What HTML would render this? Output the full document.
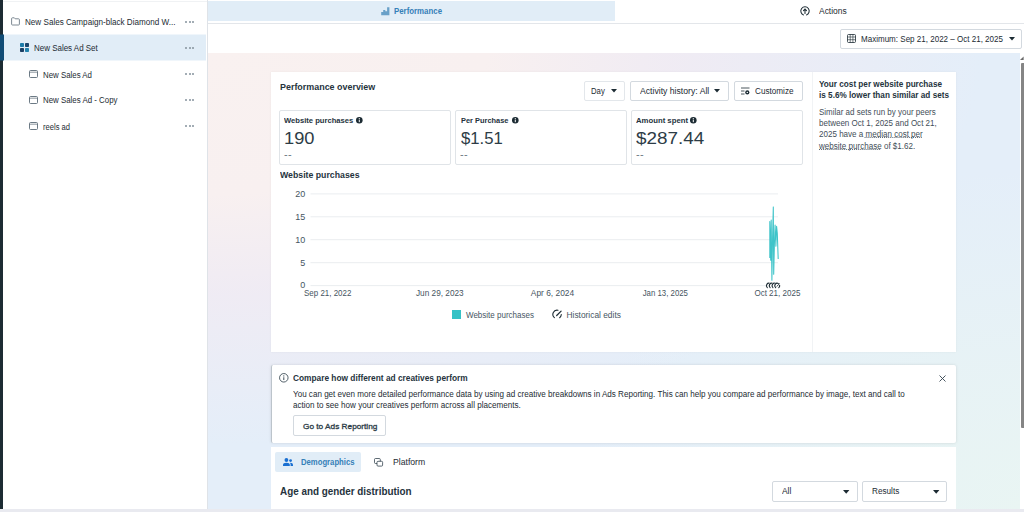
<!DOCTYPE html>
<html lang="en">
<head>
<meta charset="utf-8">
<title>Ads Manager - Performance</title>
<style>
*{box-sizing:border-box;margin:0;padding:0}
html,body{width:1024px;height:512px;overflow:hidden;background:#fff}
body{position:relative;font-family:"Liberation Sans",sans-serif;color:#1c2b33;font-size:8.4px;-webkit-font-smoothing:antialiased}
.abs{position:absolute}
.t{position:absolute;white-space:nowrap;line-height:12px;height:12px}
.b{font-weight:bold;color:#25333d}
#strip{left:0;top:0;width:3px;height:509px;background:#1c2b33}
#bottom{left:0;top:509px;width:1024px;height:3px;background:#e9eaf0}
#side{left:3px;top:0;width:204.6px;z-index:2;height:509px;background:#fff;border-right:1px solid #dfe3e8}
#side .sel{left:0;top:34.5px;width:203px;height:26px;background:#e1edf7}
#side .selbar{left:-3px;top:34.5px;width:4px;height:26px;background:#114c76}
.dots{position:absolute;left:182px;width:10px;height:3px}
.dots i{position:absolute;top:0;width:2px;height:2px;border-radius:50%;background:#84929d}
.dots i:nth-child(1){left:0}.dots i:nth-child(2){left:3.5px}.dots i:nth-child(3){left:7px}
#main{left:207px;top:0;width:817px;height:509px;background:#fff}
#tabPerf{left:0;top:1px;width:408px;height:20px;background:#e1edf7}
#tabline{left:0;top:22.6px;width:817px;height:1px;background:#e3e6ea}
#bg{left:0;top:53px;width:817px;height:456px;background:radial-gradient(ellipse 95% 86% at 0% 0%,#f9f1f0 0%,#f8f0f0 36%,rgba(241,235,243,.9) 60%,rgba(228,238,249,0) 100%),radial-gradient(ellipse 55% 75% at 100% 100%,#e9f5f3 0%,rgba(233,245,243,.6) 45%,rgba(228,238,249,0) 100%),#e4eef9}
#bg2{display:none}
#sb{left:812.6px;top:53px;width:4.4px;height:456px;background:#fff}
#sbthumb{left:813.6px;top:63px;width:3.4px;height:365px;background:#858585;border-radius:1px 0 0 1px}
.btn{position:absolute;background:#fff;border:1px solid #d3d9df;border-radius:2px}
.card{position:absolute;background:#fff}
.box{position:absolute;background:#fff;border:1px solid #e0e4e8;border-radius:2px}
.g{color:#3f4e58}
.du{text-decoration:underline dotted #56636d;text-decoration-thickness:0.9px;text-underline-offset:0.3px;text-decoration-skip-ink:none}
svg{position:absolute;overflow:visible}
</style>
</head>
<body>
<div id="strip" class="abs"></div>
<div id="bottom" class="abs"></div>

<!-- SIDEBAR -->
<div id="side" class="abs">
  <div class="abs" style="left:0;top:1px;width:204px;height:1px;background:#f0f2f4"></div>
  <svg style="left:-3px;top:0" width="207" height="70" viewBox="0 0 207 70"><rect x="3" y="34.5" width="203" height="26" fill="#e1edf7"/><rect x="0" y="34.5" width="4" height="26" fill="#114c76"/></svg>
  <svg style="left:8px;top:17px" width="9" height="9" viewBox="0 0 9 9"><path d="M0.6 1.6 Q0.6 0.8 1.4 0.8 H3.3 L4.2 1.8 H7.6 Q8.4 1.8 8.4 2.6 V7.2 Q8.4 8 7.6 8 H1.4 Q0.6 8 0.6 7.2 Z" fill="none" stroke="#6f7d88" stroke-width="0.9"/></svg>
  <span class="t" id="s1" style="left:21.50px;top:16.00px;font-size:8.3px;transform:scaleX(0.9772);transform-origin:0 50%">New Sales Campaign-black Diamond W...</span>
  <div class="dots" style="top:20.5px"><i></i><i></i><i></i></div>

  <svg style="left:17px;top:43px" width="9" height="9" viewBox="0 0 9 9"><rect x="0" y="0" width="4" height="4" rx="0.8" fill="#1c7ba9"/><rect x="5" y="0" width="4" height="4" rx="0.8" fill="#1b456b"/><rect x="0" y="5" width="4" height="4" rx="0.8" fill="#1b3f63"/><rect x="5" y="5" width="4" height="4" rx="0.8" fill="#2383ae"/></svg>
  <span class="t" id="s2" style="left:30.75px;top:41.75px;font-size:8.3px;transform:scaleX(0.9598);transform-origin:0 50%">New Sales Ad Set</span>
  <div class="dots" style="top:46.6px"><i></i><i></i><i></i></div>

  <svg style="left:26px;top:70px" width="9" height="8" viewBox="0 0 9 8"><rect x="0.5" y="0.5" width="8" height="7" rx="1" fill="none" stroke="#5b6b77" stroke-width="0.9"/><path d="M0.5 2.2 H8.5" stroke="#5b6b77" stroke-width="0.7"/></svg>
  <span class="t" id="s3" style="left:40.00px;top:68.70px;font-size:8.3px;transform:scaleX(0.9486);transform-origin:0 50%">New Sales Ad</span>
  <div class="dots" style="top:73px"><i></i><i></i><i></i></div>

  <svg style="left:26px;top:96px" width="9" height="8" viewBox="0 0 9 8"><rect x="0.5" y="0.5" width="8" height="7" rx="1" fill="none" stroke="#5b6b77" stroke-width="0.9"/><path d="M0.5 2.2 H8.5" stroke="#5b6b77" stroke-width="0.7"/></svg>
  <span class="t" id="s4" style="left:40.00px;top:94.10px;font-size:8.3px;transform:scaleX(0.9502);transform-origin:0 50%">New Sales Ad - Copy</span>
  <div class="dots" style="top:98.5px"><i></i><i></i><i></i></div>

  <svg style="left:26px;top:122px" width="9" height="8" viewBox="0 0 9 8"><rect x="0.5" y="0.5" width="8" height="7" rx="1" fill="none" stroke="#5b6b77" stroke-width="0.9"/><path d="M0.5 2.2 H8.5" stroke="#5b6b77" stroke-width="0.7"/></svg>
  <span class="t" id="s5" style="left:40.00px;top:120.50px;font-size:8.3px;transform:scaleX(0.9143);transform-origin:0 50%">reels ad</span>
  <div class="dots" style="top:124.5px"><i></i><i></i><i></i></div>
</div>

<!-- MAIN -->
<div id="main" class="abs">
  <div id="tabPerf" class="abs"></div>
  <div id="tabline" class="abs"></div>
  <div id="bg" class="abs"></div>
  <div id="bg2" class="abs"></div>
  <div id="sb" class="abs"></div>
  <div id="sbthumb" class="abs"></div>
  <svg style="left:813.4px;top:56px" width="3.6" height="4" viewBox="0 0 3.6 4"><path d="M0 4 L3.6 0.4 V4 Z" fill="#6a6a6a"/></svg>

  <!-- top tabs -->
  <svg style="left:174.1px;top:6.6px" width="8.6" height="8.2" viewBox="0 0 9 9"><path d="M0 9 V5.6 H2.2 V3.4 H4.5 V4.6 H6.5 V0.4 H9 V9 Z" fill="#69a0c8"/></svg>
  <span class="t b" id="tp" style="left:187.00px;top:5.00px;color:#3580b8;font-size:8.5px;transform:scaleX(0.9236);transform-origin:0 50%">Performance</span>
  <svg style="left:593.3px;top:6px" width="10" height="10" viewBox="0 0 10 10"><g fill="none" stroke="#1c2b33" stroke-width="1.05" stroke-linecap="round"><path d="M3.5 8.9 A4.2 4.2 0 1 1 6.5 8.9"/><path d="M5 7.4 V3.2 M3.5 4.6 L5 3.1 L6.5 4.6"/></g></svg>
  <span class="t" id="ta" style="left:612.00px;top:5.00px;font-size:8.4px;transform:scaleX(1.0102);transform-origin:0 50%">Actions</span>
  <div class="btn" id="dateBtn" style="left:633.2px;top:28.6px;width:181.4px;height:20px"></div>
  <svg style="left:640px;top:33.5px" width="9" height="9" viewBox="0 0 9 9"><rect x="0.5" y="0.5" width="8" height="8" rx="1" fill="none" stroke="#1c2b33" stroke-width="0.8"/><path d="M0.5 3 H8.5 M0.5 5.7 H8.5 M3.2 0.5 V8.5 M5.9 0.5 V8.5" stroke="#1c2b33" stroke-width="0.6"/></svg>
  <span class="t" id="td" style="left:654.00px;top:32.50px;font-size:8.3px;transform:scaleX(0.9681);transform-origin:0 50%">Maximum: Sep 21, 2022 – Oct 21, 2025</span>
  <svg style="left:801.8px;top:36.8px" width="6" height="3.6" viewBox="0 0 7 4"><path d="M0 0 H7 L3.5 4 Z" fill="#1c2b33"/></svg>


  <!-- card 1 -->
  <div class="card" id="c1" style="left:63.5px;top:71.5px;width:685.5px;height:280.5px;box-shadow:0 0 2px rgba(0,0,0,.06)"></div>
  <div class="abs" style="left:604.5px;top:71.5px;width:1px;height:280.5px;background:#f1f3f5"></div>
  <span class="t b" id="po" style="left:72.75px;top:81.00px;font-size:9.5px;transform:scaleX(0.9394);transform-origin:0 50%">Performance overview</span>
  <div class="btn" style="left:377px;top:80.5px;width:41px;height:20px;border-color:#e3e7eb"></div>
  <span class="t" id="bday" style="left:383.75px;top:85.00px;font-size:8.3px;transform:scaleX(0.9312);transform-origin:0 50%">Day</span>
  <svg style="left:403.5px;top:88.5px" width="6" height="3.6" viewBox="0 0 7 4"><path d="M0 0 H7 L3.5 4 Z" fill="#1c2b33"/></svg>
  <div class="btn" style="left:423px;top:80.5px;width:99px;height:20px"></div>
  <span class="t" id="bact" style="left:432.50px;top:85.00px;font-size:8.4px;transform:scaleX(1.0333);transform-origin:0 50%">Activity history: All</span>
  <svg style="left:507px;top:88.5px" width="6" height="3.6" viewBox="0 0 7 4"><path d="M0 0 H7 L3.5 4 Z" fill="#1c2b33"/></svg>
  <div class="btn" style="left:527px;top:80.5px;width:68.5px;height:20px"></div>
  <svg style="left:534px;top:86.5px" width="9" height="8" viewBox="0 0 9 8"><path d="M0 1 H8.5 M0 4 H3.5 M0 7 H3.5" stroke="#1c2b33" stroke-width="0.8"/><circle cx="6.3" cy="5.4" r="2.1" fill="#1c2b33"/><circle cx="6.3" cy="5.4" r="0.7" fill="#fff"/></svg>
  <span class="t" id="bcus" style="left:547.50px;top:85.00px;font-size:8.3px;transform:scaleX(0.9821);transform-origin:0 50%">Customize</span>

  <div class="box" style="left:72px;top:110px;width:172px;height:54.5px"></div>
  <div class="box" style="left:248px;top:110px;width:172px;height:54.5px"></div>
  <div class="box" style="left:424px;top:110px;width:172px;height:54.5px"></div>
  <span class="t b" id="m1l" style="left:77.25px;top:115.00px;font-size:7.9px;transform:scaleX(0.9647);transform-origin:0 50%">Website purchases</span>
  <span class="t b" id="m2l" style="left:253.50px;top:115.00px;font-size:7.9px;transform:scaleX(0.9415);transform-origin:0 50%">Per Purchase</span>
  <span class="t b" id="m3l" style="left:429.25px;top:115.00px;font-size:7.9px;transform:scaleX(0.9803);transform-origin:0 50%">Amount spent</span>
  <svg style="left:148.5px;top:116.9px" width="6.6" height="6.6" viewBox="0 0 6 6"><circle cx="3" cy="3" r="3" fill="#1c2b33"/><rect x="2.55" y="2.5" width="0.9" height="2.2" fill="#fff"/><circle cx="3" cy="1.5" r="0.55" fill="#fff"/></svg> <svg style="left:305px;top:116.9px" width="6.6" height="6.6" viewBox="0 0 6 6"><circle cx="3" cy="3" r="3" fill="#1c2b33"/><rect x="2.55" y="2.5" width="0.9" height="2.2" fill="#fff"/><circle cx="3" cy="1.5" r="0.55" fill="#fff"/></svg> <svg style="left:482.5px;top:116.9px" width="6.6" height="6.6" viewBox="0 0 6 6"><circle cx="3" cy="3" r="3" fill="#1c2b33"/><rect x="2.55" y="2.5" width="0.9" height="2.2" fill="#fff"/><circle cx="3" cy="1.5" r="0.55" fill="#fff"/></svg>
  <span class="t" id="m1v" style="color:#2d3c46;left:77.25px;top:127.75px;font-size:16.3px;line-height:20px;height:20px;transform:scaleX(1.1225);transform-origin:0 50%">190</span>
  <span class="t" id="m2v" style="color:#2d3c46;left:253.50px;top:127.75px;font-size:16.3px;line-height:20px;height:20px;transform:scaleX(1.0245);transform-origin:0 50%">$1.51</span>
  <span class="t" id="m3v" style="color:#2d3c46;left:429.25px;top:127.75px;font-size:16.3px;line-height:20px;height:20px;transform:scaleX(1.1595);transform-origin:0 50%">$287.44</span>
  <span class="t g" style="left:77px;top:147.5px;font-size:11px;letter-spacing:0.3px;color:#6b7882">--</span>
  <span class="t g" style="left:253px;top:147.5px;font-size:11px;letter-spacing:0.3px;color:#6b7882">--</span>
  <span class="t g" style="left:429px;top:147.5px;font-size:11px;letter-spacing:0.3px;color:#6b7882">--</span>
  <span class="t b" id="wp" style="left:72.50px;top:169.00px;font-size:9.1px;transform:scaleX(0.9611);transform-origin:0 50%">Website purchases</span>

  <svg id="chart" style="left:0;top:0" width="817" height="509" viewBox="0 0 817 509">
  <style>.ax{font-family:"Liberation Sans",sans-serif;font-size:8.2px;fill:#46555f}.ay{font-size:9px}</style>
  <path d="M103.5 193.9 H571" stroke="#e8ebee" stroke-width="0.9"/><text x="98.2" y="196.70000000000002" text-anchor="end" class="ax ay">20</text>
  <path d="M103.5 216.8 H571" stroke="#e8ebee" stroke-width="0.9"/><text x="98.2" y="219.60000000000002" text-anchor="end" class="ax ay">15</text>
  <path d="M103.5 239.7 H571" stroke="#e8ebee" stroke-width="0.9"/><text x="98.2" y="242.5" text-anchor="end" class="ax ay">10</text>
  <path d="M103.5 262.7 H571" stroke="#e8ebee" stroke-width="0.9"/><text x="98.2" y="265.5" text-anchor="end" class="ax ay">5</text>
  <path d="M103.5 285.6 H571" stroke="#e8ebee" stroke-width="0.9"/><text x="98.2" y="288.40000000000003" text-anchor="end" class="ax ay">0</text>
  <polyline points="562.8,257.9 562.8,221.6 563.7,260.3 564.2,220 564.9,280.2 565.6,236.8 566.3,206.9 566.7,274.3 567.4,243.9 568.1,225.1 568.9,246.2 569.6,226.3 570.3,233.3 571.2,259.1" fill="none" stroke="#3ec4c9" stroke-width="1.05" stroke-linejoin="round"/>
  <text x="97" y="296.3" textLength="47.4" lengthAdjust="spacingAndGlyphs" class="ax">Sep 21, 2022</text>
  <text x="209" y="296.3" textLength="47.7" lengthAdjust="spacingAndGlyphs" class="ax">Jun 29, 2023</text>
  <text x="323.8" y="296.3" textLength="43.4" lengthAdjust="spacingAndGlyphs" class="ax">Apr 6, 2024</text>
  <text x="435.7" y="296.3" textLength="45.3" lengthAdjust="spacingAndGlyphs" class="ax">Jan 13, 2025</text>
  <text x="547.4" y="296.3" textLength="46.0" lengthAdjust="spacingAndGlyphs" class="ax">Oct 21, 2025</text>
  <g fill="none" stroke="#1c2b33" stroke-width="1.15" stroke-linecap="round"><circle cx="561.9" cy="285.7" r="3.1" fill="#fff" stroke="none"/><path d="M560.3 287.6 A2.5 2.5 0 0 1 563.0 283.45"/><circle cx="564.7" cy="285.7" r="3.1" fill="#fff" stroke="none"/><path d="M563.1 287.6 A2.5 2.5 0 0 1 565.8 283.45"/><circle cx="567.5" cy="285.7" r="3.1" fill="#fff" stroke="none"/><path d="M565.9 287.6 A2.5 2.5 0 0 1 568.6 283.45"/><circle cx="570.2" cy="285.7" r="3.1" fill="#fff" stroke="none"/><path d="M568.6 287.6 A2.5 2.5 0 0 1 571.3 283.45"/><path d="M572.65 285.3 A2.5 2.5 0 0 1 571.8 287.6"/><path d="M569.9 286.3 L572.4 283.8" stroke-width="0.9"/></g>
  <rect x="245" y="310" width="9" height="9" fill="#35c2c6"/>
  <text x="259" y="317.8" textLength="68" lengthAdjust="spacingAndGlyphs" class="ax">Website purchases</text>
  <g fill="none" stroke="#1c2b33" stroke-width="1.1" stroke-linecap="round"><path d="M347.4 317.62 A4.2 4.2 0 0 1 350.97 310.29"/><path d="M354.3 314.55 A4.2 4.2 0 0 1 352.69 317.71"/><path d="M349.7 315.5 L354.1 311.1" stroke-width="1.25"/></g>
  <text x="359.5" y="317.8" textLength="54.4" lengthAdjust="spacingAndGlyphs" class="ax">Historical edits</text>
  </svg>


  <span class="t b" id="r1" style="left:612.25px;top:78.01px;font-size:8.9px;transform:scaleX(0.9213);transform-origin:0 50%">Your cost per website purchase</span>
  <span class="t b" id="r2" style="left:612.25px;top:89.26px;font-size:8.9px;transform:scaleX(0.9215);transform-origin:0 50%">is 5.6% lower than similar ad sets</span>
  <span class="t g" id="r3" style="left:612.25px;top:105.50px;font-size:8.3px;transform:scaleX(0.9626);transform-origin:0 50%">Similar ad sets run by your peers</span>
  <span class="t g" id="r4" style="left:612.25px;top:116.75px;font-size:8.3px;transform:scaleX(0.9669);transform-origin:0 50%">between Oct 1, 2025 and Oct 21,</span>
  <span class="t g" id="r5" style="left:612.25px;top:128.26px;font-size:8.3px;transform:scaleX(0.9695);transform-origin:0 50%">2025 have a <span class="du">median cost per</span></span>
  <span class="t g" id="r6" style="left:612.25px;top:139.50px;font-size:8.3px;transform:scaleX(0.9704);transform-origin:0 50%"><span class="du">website purchase</span> of $1.62.</span>



  <!-- card 2 -->
  <div class="card" id="c2" style="left:63.6px;top:365.3px;width:685.6px;height:77.5px;border-left:1.3px solid #bcc4cb;border-radius:2px;box-shadow:0 0 3px rgba(0,0,0,.12)"></div>
  <svg style="left:72.1px;top:373.2px" width="9.6" height="9.6" viewBox="0 0 9 9"><circle cx="4.5" cy="4.5" r="4" fill="none" stroke="#34444f" stroke-width="0.8"/><path d="M4.5 4 V6.6" stroke="#34444f" stroke-width="0.9"/><circle cx="4.5" cy="2.7" r="0.55" fill="#34444f"/></svg>
  <span class="t b" id="c2t" style="left:86.26px;top:372.00px;font-size:9.1px;transform:scaleX(0.9148);transform-origin:0 50%">Compare how different ad creatives perform</span>
  <span class="t" id="c2a" style="left:86.26px;top:387.90px;font-size:8.3px;transform:scaleX(0.9731);transform-origin:0 50%">You can get even more detailed performance data by using ad creative breakdowns in Ads Reporting. This can help you compare ad performance by image, text and call to</span>
  <span class="t" id="c2b" style="left:86.26px;top:399.40px;font-size:8.3px;transform:scaleX(0.9741);transform-origin:0 50%">action to see how your creatives perform across all placements.</span>
  <div class="btn" style="left:86.2px;top:415px;width:93px;height:21px"></div>
  <span class="t" id="c2btn" style="left:95.60px;top:420.51px;font-weight:normal;-webkit-text-stroke:0.3px #2b3b46;font-size:8.1px;color:#2b3b46;transform:scaleX(1.0207);transform-origin:0 50%">Go to Ads Reporting</span>
  <svg style="left:732.3px;top:374.5px" width="7" height="7" viewBox="0 0 7 7"><path d="M0.5 0.5 L6.5 6.5 M6.5 0.5 L0.5 6.5" stroke="#34444f" stroke-width="0.9"/></svg>


  <!-- card 3 -->
  <div class="card" id="c3" style="left:63.5px;top:447.3px;width:685.5px;height:61.7px"></div>
  <div class="abs" style="left:68px;top:452px;width:86px;height:20.4px;background:#e1edf7;border-radius:2px"></div>
  <svg style="left:75.5px;top:458px" width="10" height="8" viewBox="0 0 10 8"><circle cx="3.4" cy="2" r="1.9" fill="#1a6fd1"/><path d="M0 8 V6.8 Q0 4.7 3.4 4.7 Q6.8 4.7 6.8 6.8 V8 Z" fill="#1a6fd1"/><circle cx="7.6" cy="2.6" r="1.4" fill="#1a6fd1"/><path d="M7.4 4.8 Q10 4.8 10 6.8 V8 H7.6 V6.6 Q7.6 5.6 7 4.9 Z" fill="#1a6fd1"/></svg>
  <span class="t b" id="c3d" style="left:94.00px;top:456.30px;color:#3580b8;font-size:8.5px;transform:scaleX(0.9061);transform-origin:0 50%">Demographics</span>
  <svg style="left:166.8px;top:458px" width="9" height="9" viewBox="0 0 9 9"><rect x="0.5" y="0.5" width="5.8" height="5" rx="1" fill="none" stroke="#34444f" stroke-width="0.8"/><rect x="3" y="3.3" width="5.6" height="4.8" rx="1" fill="#fff" stroke="#34444f" stroke-width="0.8"/></svg>
  <span class="t" id="c3p" style="left:185.61px;top:456.30px;font-size:8.4px;transform:scaleX(1.0325);transform-origin:0 50%">Platform</span>
  <span class="t b" id="c3h" style="left:72.81px;top:484.00px;font-size:10.8px;line-height:14px;height:14px;transform:scaleX(0.9141);transform-origin:0 50%">Age and gender distribution</span>
  <div class="btn" style="left:565.2px;top:481.2px;width:85.4px;height:20.4px"></div>
  <span class="t" id="c3a" style="left:574.90px;top:485.40px;font-size:8.4px;transform:scaleX(1.0040);transform-origin:0 50%">All</span>
  <svg style="left:636px;top:489.5px" width="6.4" height="3.8" viewBox="0 0 7 4"><path d="M0 0 H7 L3.5 4 Z" fill="#1c2b33"/></svg>
  <div class="btn" style="left:655.2px;top:481.2px;width:85px;height:20.4px"></div>
  <span class="t" id="c3r" style="left:664.50px;top:485.40px;font-size:8.4px;transform:scaleX(0.9754);transform-origin:0 50%">Results</span>
  <svg style="left:725.8px;top:489.5px" width="6.4" height="3.8" viewBox="0 0 7 4"><path d="M0 0 H7 L3.5 4 Z" fill="#1c2b33"/></svg>

</div>
</body>
</html>
